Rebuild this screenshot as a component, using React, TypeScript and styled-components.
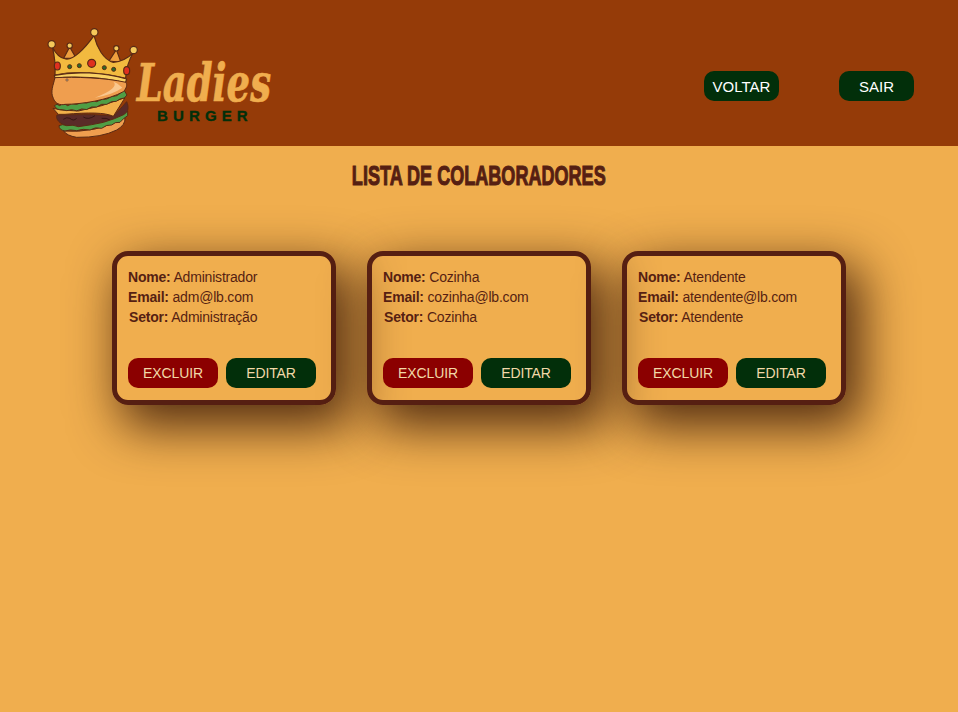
import React from "react";
import styled, { createGlobalStyle } from "styled-components";

const Global = createGlobalStyle`
  html, body { margin: 0; padding: 0; }
  body { background: #f0ae4e; font-family: "Liberation Sans", Arial, sans-serif; min-height: 712px; overflow: hidden; }
`;
const Header = styled.header`
  height: 146px;
  background: #953b08;
  display: flex;
  align-items: center;
  justify-content: space-between;
  padding: 0 44px 0 30px;
`;
const Logo = styled.svg`
  width: 260px;
  height: 130px;
  display: block;
  margin-top: 14px;
`;
const Nav = styled.nav`
  display: flex;
  gap: 60px;
  margin-top: 26px;
`;
const NavButton = styled.button`
  width: 75px;
  height: 30px;
  padding: 0;
  border: 0;
  border-radius: 10px;
  background: #022f0a;
  color: #fff;
  font: 15px "Liberation Sans", Arial, sans-serif;
`;
const Title = styled.h1`
  margin: 15px 0 0;
  height: 30px;
  text-align: center;
  color: #561f12;
  font: 700 28px/30px "Liberation Sans", sans-serif;
`;
const TitleText = styled.span`
  display: inline-block;
  transform: scaleX(0.645);
  white-space: nowrap;
  -webkit-text-stroke: 1.1px #561f12;
`;
const Cards = styled.section`
  display: flex;
  justify-content: center;
  gap: 31px;
  margin-top: 60px;
`;
const Card = styled.article`
  box-sizing: border-box;
  width: 224px;
  height: 154px;
  padding: 11px 11px 12px;
  border: 5px solid #561f12;
  border-radius: 16px;
  box-shadow: 12px 18px 50px 4px rgba(40, 10, 0, 0.78);
  color: #561f12;
  font-size: 14px;
  line-height: 20px;
  letter-spacing: -0.2px;
  display: flex;
  flex-direction: column;
`;
const Line = styled.div<{ $indent?: boolean }>`
  white-space: nowrap;
  margin-left: ${(p) => (p.$indent ? "1px" : "0")};
`;
const Actions = styled.div`
  display: flex;
  gap: 8px;
  margin-top: auto;
`;
const Action = styled.button<{ $tone: "danger" | "ok" }>`
  width: 90px;
  height: 30px;
  padding: 0;
  border: 0;
  border-radius: 10px;
  background: ${(p) => (p.$tone === "danger" ? "#8b0000" : "#022f0a")};
  color: #f2d9a8;
  font: 14px "Liberation Sans", Arial, sans-serif;
  letter-spacing: -0.1px;
`;

const people = [
  { nome: "Administrador", email: "adm@lb.com", setor: "Administração" },
  { nome: "Cozinha", email: "cozinha@lb.com", setor: "Cozinha" },
  { nome: "Atendente", email: "atendente@lb.com", setor: "Atendente" },
];

const BurgerLogo = () => (
  <Logo viewBox="0 0 780 390" aria-label="Ladies Burger">
    <g transform="translate(45 30)" stroke="#5a2a14" strokeWidth="3.5" strokeLinejoin="round">
      <path d="M74 66 L56 100 L94 100 Z M214 74 L192 108 L228 112 Z" fill="#ee9f3e" />
      <path d="M22 66 C30 82 44 100 62 102 C85 106 120 70 147 32 C155 65 175 105 205 112 C225 112 250 100 265 82 C252 105 243 135 242 160 C170 142 90 138 30 150 C32 120 28 90 22 66 Z" fill="#f2ba3f" />
      <path d="M28 151 C90 138 175 142 245 162 L241 174 C180 158 90 152 30 160 Z" fill="#f9d163" />
      <circle cx="20" cy="58" r="11" fill="#f5c85a" />
      <circle cx="74" cy="62" r="8" fill="#f5c85a" />
      <circle cx="148" cy="22" r="11" fill="#f5c85a" />
      <circle cx="214" cy="70" r="8" fill="#f5c85a" />
      <circle cx="266" cy="75" r="11" fill="#f5c85a" />
      <ellipse cx="37" cy="123" rx="9" ry="12" fill="#e0301e" />
      <circle cx="140" cy="115" r="12" fill="#e0301e" />
      <ellipse cx="245" cy="137" rx="9" ry="12" fill="#e0301e" />
      <g fill="#2d6b2a" strokeWidth="3">
        <circle cx="74" cy="125" r="6" />
        <circle cx="103" cy="122" r="6" />
        <circle cx="178" cy="128" r="6" />
        <circle cx="206" cy="133" r="6" />
      </g>
    </g>
    <g transform="translate(45 180)" stroke="#5a2a14" strokeWidth="3" strokeLinejoin="round">
      <path d="M56 168 Q100 172 150 162 Q200 150 240 128 Q242 150 215 165 Q170 188 95 187 Q65 182 56 168Z" fill="#ef9e4f" />
      <path d="M36 120 C80 120 150 116 205 124 L232 95 L245 80 C252 95 250 110 240 118 C225 130 180 148 120 155 C85 158 50 152 40 138 C34 130 34 125 36 120Z" fill="#5a2a28" />
      <path d="M55 133 Q65 125 75 130 Q85 140 95 130 M115 126 Q130 136 150 122 M170 130 Q185 128 195 135" fill="none" strokeWidth="2.5" stroke="#2e1210" />
      <path d="M42 152 Q52 146 65 152 Q85 148 100 155 Q140 150 175 142 Q210 132 238 118 L248 108 L248 122 Q235 130 225 142 Q210 140 200 150 Q185 148 170 160 Q150 155 135 165 Q115 160 95 167 Q75 162 60 168 Q42 165 42 152Z" fill="#4f9e45" />
      <path d="M90 92 L140 86 L138 102 Q112 108 92 106Z M188 72 L222 66 L216 84 Q200 88 190 86Z" fill="#c7252c" />
      <path d="M24 100 L50 105 L100 108 L170 92 L240 68 L205 124 C180 112 130 112 60 118 L40 118 Z" fill="#f2b04a" />
      <path d="M28 92 Q36 84 44 92 Q55 82 68 92 Q80 82 95 88 Q110 78 125 84 Q140 74 155 80 Q170 70 185 72 Q200 62 215 62 Q230 55 235 42 L246 60 Q240 72 225 72 Q215 82 200 80 Q185 92 170 88 Q155 100 140 96 Q125 108 110 102 Q95 112 80 104 Q65 110 52 104 Q35 106 28 92Z" fill="#4f9e45" />
      <path d="M30 8 C25 30 15 50 25 70 C30 85 45 92 60 88 C110 88 190 75 235 50 C245 40 247 30 243 22 C180 8 90 5 30 8Z" fill="#ef9e4f" />
      <path d="M150 68 Q205 58 232 38 Q215 22 205 20 Q225 38 150 68Z" fill="#f9c78e" stroke="none" />
      <circle cx="66" cy="15" r="3.5" fill="#b9a487" strokeWidth="1.5" />
    </g>
    <text x="320" y="258" fill="#f0ae4e" stroke="#f0ae4e" strokeWidth="2" fontFamily="'DejaVu Serif', serif" fontWeight="700" fontStyle="italic" fontSize="158" textLength="403" lengthAdjust="spacingAndGlyphs">Ladies</text>
    <text x="381" y="318" fill="#022f0a" stroke="#022f0a" strokeWidth="1" fontFamily="'Liberation Sans', sans-serif" fontWeight="700" fontSize="45" textLength="272">BURGER</text>
  </Logo>
);

export default function App() {
  return (
    <>
      <Global />
      <Header>
        <BurgerLogo />
        <Nav>
          <NavButton>VOLTAR</NavButton>
          <NavButton>SAIR</NavButton>
        </Nav>
      </Header>
      <Title><TitleText>LISTA DE COLABORADORES</TitleText></Title>
      <Cards>
        {people.map((p) => (
          <Card key={p.nome}>
            <Line><b>Nome:</b> {p.nome}</Line>
            <Line><b>Email:</b> {p.email}</Line>
            <Line $indent><b>Setor:</b> {p.setor}</Line>
            <Actions>
              <Action $tone="danger">EXCLUIR</Action>
              <Action $tone="ok">EDITAR</Action>
            </Actions>
          </Card>
        ))}
      </Cards>
    </>
  );
}
